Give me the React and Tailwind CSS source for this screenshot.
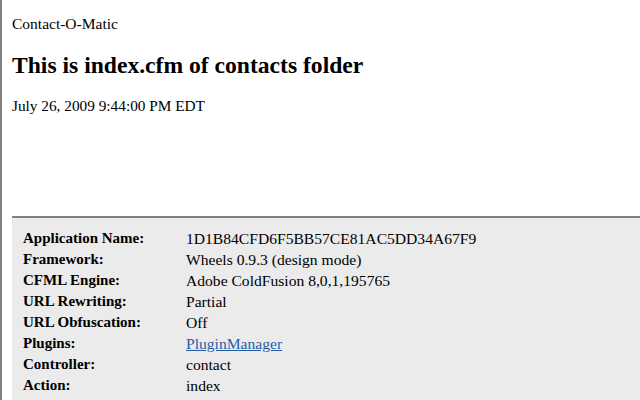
const rows = [
  ['Application Name:', '1D1B84CFD6F5BB57CE81AC5DD34A67F9'],
  ['Framework:', 'Wheels 0.9.3 (design mode)'],
  ['CFML Engine:', 'Adobe ColdFusion 8,0,1,195765'],
  ['URL Rewriting:', 'Partial'],
  ['URL Obfuscation:', 'Off'],
  ['Plugins:', 'PluginManager', true],
  ['Controller:', 'contact'],
  ['Action:', 'index'],
]

export default function App() {
  return (
    <div className="h-[400px] w-[640px] overflow-hidden bg-white border-l-2 border-[#808080] font-['Liberation_Serif',serif] text-black">
      <div className="pl-[10px] pt-[15px]">
        <p className="text-[15.5px] leading-[18px]">Contact-O-Matic</p>
        <h2 className="mt-[18px] text-[23.6px] font-bold leading-[28px]">This is index.cfm of contacts folder</h2>
        <p className="mt-[18px] text-[15.3px] leading-[18px]">July 26, 2009 9:44:00 PM EDT</p>
      </div>
      <div className="ml-[10px] mt-[101px] border-t-2 border-[#808080] bg-[#ebebeb] pl-[11px] pt-[10px] pb-4">
        <table className="leading-[21px]">
          <tbody>
            {rows.map(([label, value, link]) => (
              <tr key={label}>
                <td className="w-[163px] p-0 text-[15px] font-bold">{label}</td>
                <td className="p-0 text-[15.6px]">
                  {link ? <a href="#" className="text-[#1f5fa8] underline">{value}</a> : value}
                </td>
              </tr>
            ))}
          </tbody>
        </table>
      </div>
    </div>
  )
}
